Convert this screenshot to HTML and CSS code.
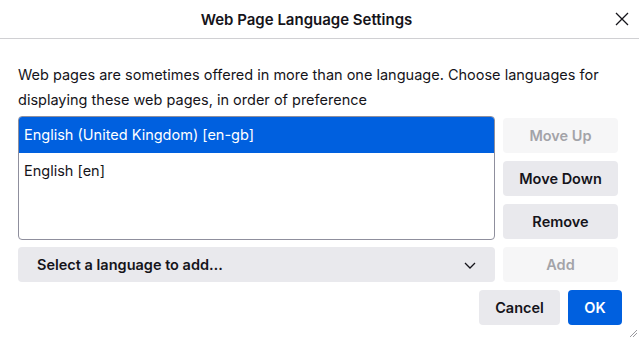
FILE: index.html
```html
<!DOCTYPE html>
<html lang="en">
<head>
    <meta charset="UTF-8">
    <meta name="viewport" content="width=device-width, initial-scale=1.0">
    <title>Web Page Language Settings</title>
    <link rel="stylesheet" href="styles.css">
</head>
<body>
    <div class="dialog">
        <div class="titlebar">
            <h1 class="title">Web Page Language Settings</h1>
            <button class="close-button" aria-label="Close">
                <svg width="14" height="14" viewBox="0 0 14 14">
                    <path d="M1 1 L13 13 M13 1 L1 13" stroke="#15141a" stroke-width="1.3" fill="none"/>
                </svg>
            </button>
        </div>

        <div class="content">
            <p class="description">
                Web pages are sometimes offered in more than one language. Choose languages for
                displaying these web pages, in order of preference
            </p>

            <div class="lang-grid">
                <ul class="lang-list">
                    <li class="selected">English (United Kingdom) [en-gb]</li>
                    <li>English [en]</li>
                </ul>
                <div class="side-buttons">
                    <button class="btn" disabled>Move Up</button>
                    <button class="btn">Move Down</button>
                    <button class="btn">Remove</button>
                </div>

                <div class="lang-select">
                    <span>Select a language to add…</span>
                    <svg width="14" height="14" viewBox="0 0 14 14">
                        <path d="M2 5 L7 10 L12 5" stroke="#15141a" stroke-width="1.3" fill="none"/>
                    </svg>
                </div>
                <button class="btn" disabled>Add</button>
            </div>

            <div class="footer">
                <button class="btn cancel">Cancel</button>
                <button class="btn primary">OK</button>
            </div>
        </div>

        <svg class="grip" width="10" height="10" viewBox="0 0 10 10">
            <path d="M9 2 L2 9 M9 5 L5 9" stroke="#9a9a9f" stroke-width="1" fill="none"/>
        </svg>
    </div>
</body>
</html>
```

FILE: styles.css
```css
body {
    font-family: "Inter", "Liberation Sans", sans-serif;
    margin: 0;
    background: white;
    color: #15141a;
}
.dialog {
    position: relative;
    width: 639px;
    height: 339px;
}
.titlebar {
    display: flex;
    align-items: center;
    height: 38px;
    border-bottom: 1px solid #d0d0d3;
}
.title {
    flex: 1;
    margin: 0;
    text-align: center;
    font-size: 15px;
    font-weight: 600;
}
.close-button {
    width: 18px;
    height: 20px;
    margin-right: 8px;
    padding: 0;
    border: none;
    background: none;
    display: flex;
    align-items: center;
    justify-content: center;
}
.content {
    padding: 23px 21px 0 18px;
}
.description {
    margin: 0 0 4px;
    font-size: 14.5px;
    line-height: 25px;
}
.lang-grid {
    display: grid;
    grid-template-columns: 1fr 115px;
    column-gap: 8px;
    row-gap: 7px;
}
.lang-list {
    list-style: none;
    margin: 0;
    padding: 0;
    height: 122px;
    border: 1px solid #8f8f9d;
    border-radius: 4px;
    overflow: hidden;
}
.lang-list li {
    height: 36px;
    line-height: 36px;
    padding: 0 5px;
    font-size: 14.5px;
}
.lang-list li.selected {
    background: #0060df;
    color: white;
}
.side-buttons {
    display: flex;
    flex-direction: column;
    gap: 8px;
    padding-top: 2px;
}
.btn {
    height: 35px;
    padding: 0 16px;
    border: none;
    border-radius: 4px;
    background: #e9e9ed;
    color: #15141a;
    font-family: inherit;
    font-size: 14.5px;
    font-weight: 600;
}
.btn:disabled {
    background: #f6f6f7;
    color: #a3a3a8;
}
.lang-select {
    display: flex;
    align-items: center;
    justify-content: space-between;
    height: 35px;
    padding: 0 18px 0 19px;
    border-radius: 4px;
    background: #e9e9ed;
    font-size: 14.5px;
    font-weight: 600;
}
.footer {
    display: flex;
    justify-content: flex-end;
    gap: 8px;
    margin-top: 8px;
    margin-right: -4px;
}
.cancel {
    width: 81px;
}
.primary {
    width: 54px;
    background: #0060df;
    color: white;
}
.grip {
    position: absolute;
    right: 1px;
    bottom: 1px;
}
```
